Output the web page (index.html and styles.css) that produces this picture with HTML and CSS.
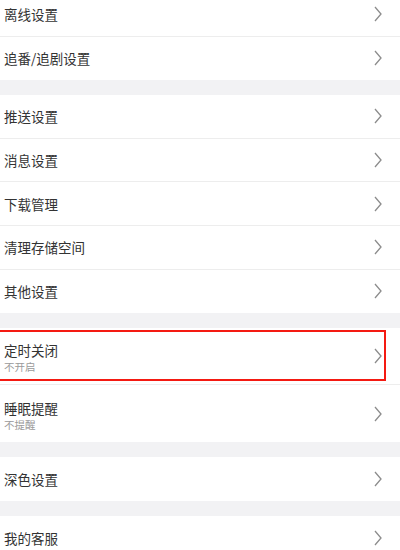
FILE: index.html
```html
<!doctype html>
<html lang="zh-CN">
  <head>
    <meta charset="utf-8">
    <title>设置</title>
    <link rel="stylesheet" href="styles.css">
  </head>
  <body>
    <div class="settings">
      <section class="group">
        <div class="row"><span class="title">离线设置</span><svg class="chev" viewBox="0 0 8 16"><path d="M1 1 L7 8 L1 15"/></svg></div>
        <div class="row"><span class="title">追番/追剧设置</span><svg class="chev" viewBox="0 0 8 16"><path d="M1 1 L7 8 L1 15"/></svg></div>
      </section>
      <section class="group">
        <div class="row"><span class="title">推送设置</span><svg class="chev" viewBox="0 0 8 16"><path d="M1 1 L7 8 L1 15"/></svg></div>
        <div class="row"><span class="title">消息设置</span><svg class="chev" viewBox="0 0 8 16"><path d="M1 1 L7 8 L1 15"/></svg></div>
        <div class="row"><span class="title">下载管理</span><svg class="chev" viewBox="0 0 8 16"><path d="M1 1 L7 8 L1 15"/></svg></div>
        <div class="row"><span class="title">清理存储空间</span><svg class="chev" viewBox="0 0 8 16"><path d="M1 1 L7 8 L1 15"/></svg></div>
        <div class="row"><span class="title">其他设置</span><svg class="chev" viewBox="0 0 8 16"><path d="M1 1 L7 8 L1 15"/></svg></div>
      </section>
      <section class="group">
        <div class="row tall marked">
          <div class="text"><span class="title">定时关闭</span><span class="sub">不开启</span></div>
          <svg class="chev" viewBox="0 0 8 16"><path d="M1 1 L7 8 L1 15"/></svg>
          <span class="mark"></span>
        </div>
        <div class="row tall">
          <div class="text"><span class="title">睡眠提醒</span><span class="sub">不提醒</span></div>
          <svg class="chev" viewBox="0 0 8 16"><path d="M1 1 L7 8 L1 15"/></svg>
        </div>
      </section>
      <section class="group">
        <div class="row"><span class="title">深色设置</span><svg class="chev" viewBox="0 0 8 16"><path d="M1 1 L7 8 L1 15"/></svg></div>
      </section>
      <section class="group">
        <div class="row"><span class="title">我的客服</span><svg class="chev" viewBox="0 0 8 16"><path d="M1 1 L7 8 L1 15"/></svg></div>
      </section>
    </div>
  </body>
</html>
```
FILE: styles.css
```css
html, body { padding: 0; margin: 0; overflow: hidden; height: 100%; }
body {
  background: #f2f2f4;
  font-family: "Noto Sans CJK SC", "Noto Sans", sans-serif;
  color: #333;
}

.settings {
  display: flex;
  flex-direction: column;
  gap: 15px;
  margin-top: -7px;
}

.group {
  background: #fff;
  display: flex;
  flex-direction: column;
}

.row {
  height: 43.6px;
  box-sizing: border-box;
  display: flex;
  align-items: center;
  justify-content: space-between;
  padding: 0 18px 0 4px;
  border-bottom: 1px solid #ededed;
}
.group .row:last-child { border-bottom: none; }

.row.tall { height: 57px; }

.title {
  font-size: 13.5px;
  line-height: 18px;
}

.text {
  display: flex;
  flex-direction: column;
  padding-top: 3px;
}

.sub {
  font-size: 10.5px;
  line-height: 15px;
  color: #9a9a9a;
}

.chev {
  width: 8px;
  height: 16px;
  flex: none;
}
.chev path {
  fill: none;
  stroke: #8c8c8c;
  stroke-width: 1.3;
}

.marked { position: relative; }
.mark {
  position: absolute;
  left: -4px;
  right: 14px;
  top: 2px;
  bottom: 3px;
  border: 2px solid #f41a12;
}
```
